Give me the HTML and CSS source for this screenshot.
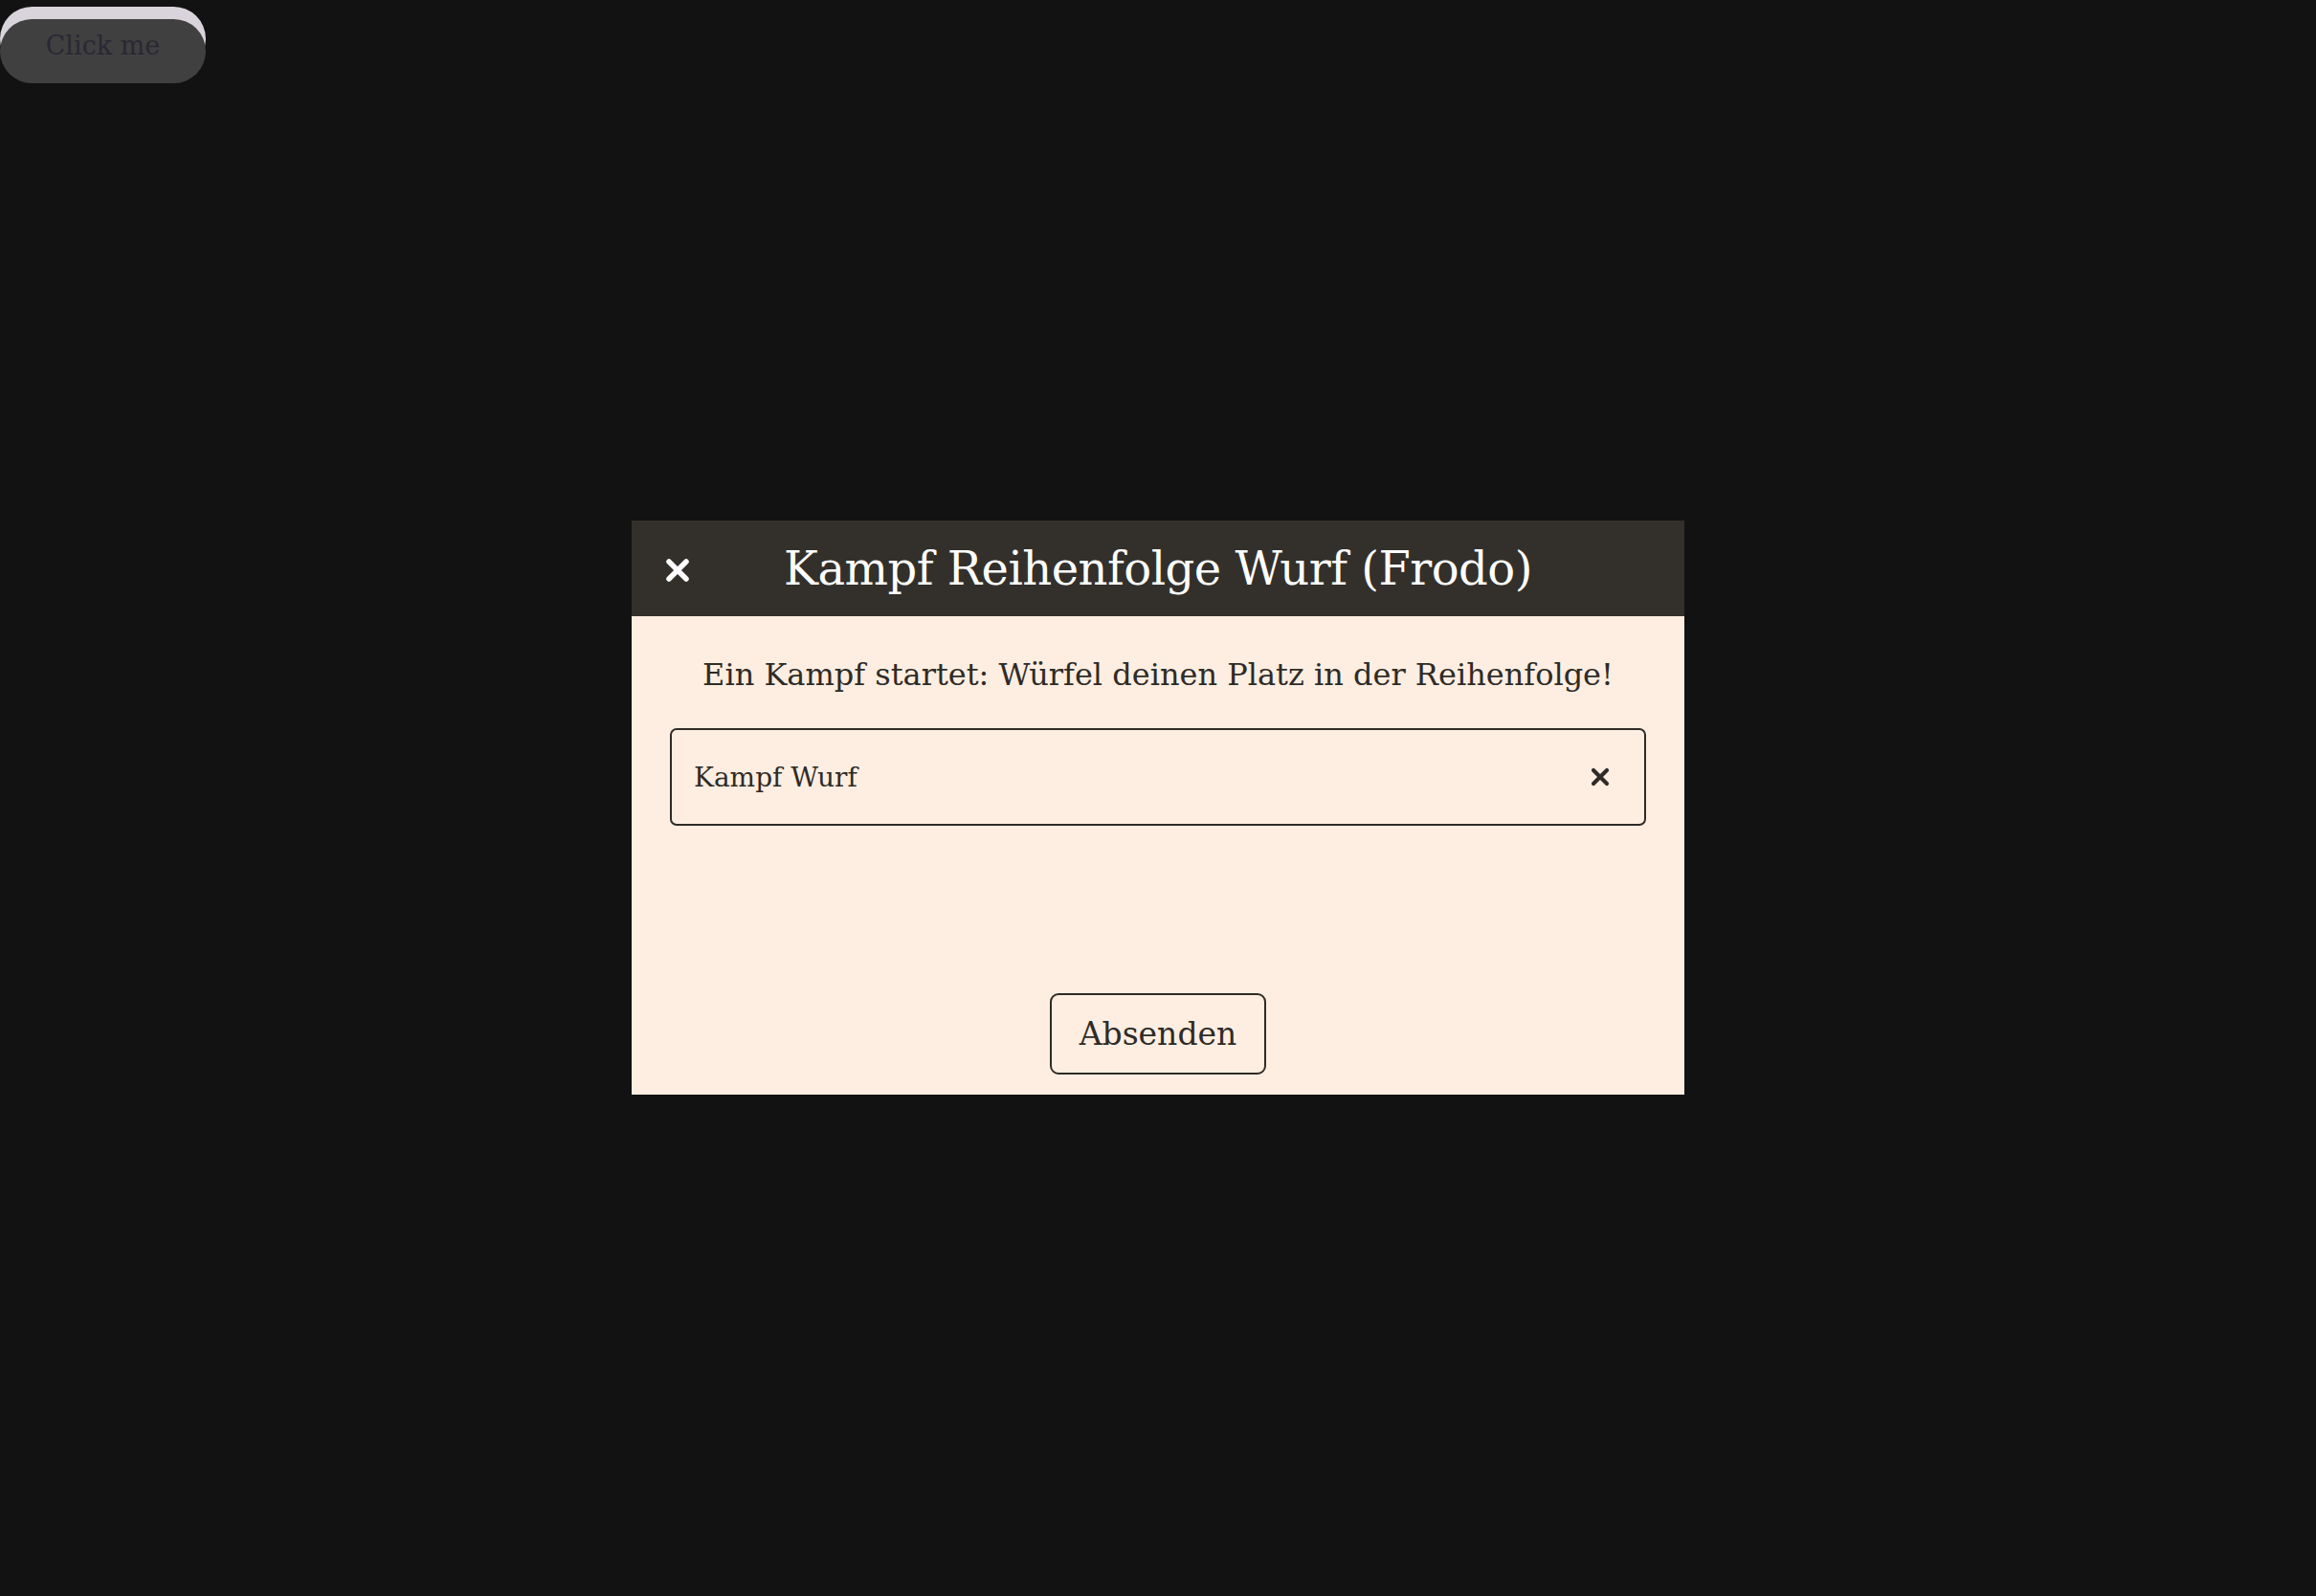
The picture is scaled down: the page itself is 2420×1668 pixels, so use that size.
FILE: index.html
```html
<!DOCTYPE html>
<html lang="de">
<head>
<meta charset="utf-8">
<title>Kampf Reihenfolge Wurf</title>
<link rel="stylesheet" href="styles.css">
</head>
<body>
<button class="click-btn" type="button">Click me</button>
<div class="overlay">
  <div class="modal" role="dialog">
    <div class="modal-header">
      <button class="close-btn" type="button" aria-label="Schließen">
        <svg width="26" height="26" viewBox="0 0 26 26"><path d="M4 4 L22 22 M22 4 L4 22" stroke="#fff" stroke-width="5.5" stroke-linecap="round"/></svg>
      </button>
      <h1 class="modal-title">Kampf Reihenfolge Wurf (Frodo)</h1>
      <span></span>
    </div>
    <div class="modal-body">
      <p class="modal-text">Ein Kampf startet: Würfel deinen Platz in der Reihenfolge!</p>
      <div class="field">
        <span class="field-value">Kampf Wurf</span>
        <button class="clear-btn" type="button" aria-label="Leeren">
          <svg width="20" height="20" viewBox="0 0 20 20"><path d="M3 3 L17 17 M17 3 L3 17" stroke="#2f2b27" stroke-width="4.2" stroke-linecap="round"/></svg>
        </button>
      </div>
      <div class="actions">
        <button class="submit-btn" type="button">Absenden</button>
      </div>
    </div>
  </div>
</div>
</body>
</html>
```

FILE: styles.css
```css
html, body {
  margin: 0;
  padding: 0;
  height: 100%;
}
body {
  background: #121212;
  font-family: "DejaVu Serif", "Liberation Serif", serif;
  color: #2f2b27;
}
.click-btn {
  display: block;
  margin-top: 20px;
  width: 215px;
  height: 67px;
  box-sizing: border-box;
  border: none;
  border-radius: 34px;
  background: #404040;
  box-shadow: 0 -13px 0 0 #d9d3db;
  color: #2a2833;
  font-family: "DejaVu Serif", serif;
  font-size: 27px;
  padding: 0 0 13px;
}
.overlay {
  position: fixed;
  inset: 0;
  padding-top: 20px;
  display: flex;
  align-items: center;
  justify-content: center;
}
.modal {
  width: 1100px;
  height: 600px;
  display: flex;
  flex-direction: column;
  background: #fdeee1;
}
.modal-header {
  height: 100px;
  flex: none;
  background: #33302b;
  display: grid;
  grid-template-columns: 100px 1fr 100px;
  align-items: center;
}
.close-btn {
  background: none;
  border: none;
  padding: 0;
  margin-left: 35px;
  margin-top: 4px;
  width: 26px;
  height: 26px;
  display: flex;
}
.modal-title {
  margin: 0;
  text-align: center;
  color: #ffffff;
  font-weight: normal;
  font-size: 48px;
  letter-spacing: -0.5px;
}
.modal-body {
  flex: 1;
  display: flex;
  flex-direction: column;
  padding: 0 40px 21px;
}
.modal-text {
  margin: 41px 0 0;
  text-align: center;
  font-size: 32px;
  line-height: 40px;
}
.field {
  margin-top: 36px;
  height: 102px;
  box-sizing: border-box;
  border: 2px solid #2f2b27;
  border-radius: 7px;
  display: flex;
  align-items: center;
  justify-content: space-between;
  padding: 0 36px 0 23px;
}
.field-value {
  font-size: 28px;
}
.clear-btn {
  background: none;
  border: none;
  padding: 0;
  width: 20px;
  height: 20px;
  display: flex;
}
.actions {
  margin-top: auto;
  display: flex;
  justify-content: center;
}
.submit-btn {
  width: 226px;
  height: 85px;
  box-sizing: border-box;
  border: 2px solid #2f2b27;
  border-radius: 9px;
  background: transparent;
  color: #2f2b27;
  font-family: "DejaVu Serif", serif;
  font-size: 33px;
  padding: 0;
}
```
